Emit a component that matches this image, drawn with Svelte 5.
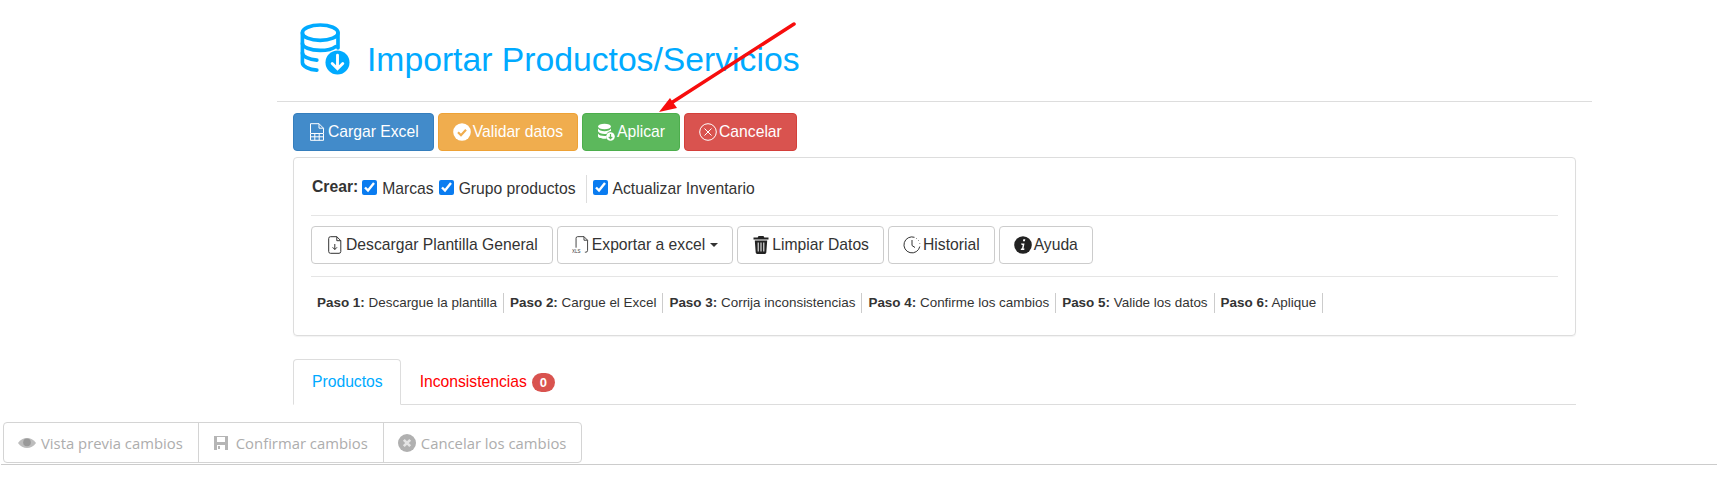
<script>
    const steps = [
        ['Paso 1:', 'Descargue la plantilla'],
        ['Paso 2:', 'Cargue el Excel'],
        ['Paso 3:', 'Corrija inconsistencias'],
        ['Paso 4:', 'Confirme los cambios'],
        ['Paso 5:', 'Valide los datos'],
        ['Paso 6:', 'Aplique']
    ];
</script>

<div class="page">
    <main class="content">
        <header class="title-row">
            <svg class="title-icon" viewBox="0 0 52 54" fill="none" stroke="#00aaff" stroke-width="3.8" stroke-linecap="round">
                <ellipse cx="21" cy="10" rx="18.5" ry="8" />
                <path d="M2.5 10v31c0 4 7 7.5 15 8M39.500 10v16" />
                <path d="M2.500 21c0 4 8 7.500 18.500 7.500 7 0 13-1.500 16-4M2.500 31c0 4 7 7 15 7.500" />
                <circle cx="39" cy="41" r="12.500" fill="#00aaff" stroke="none" />
                <path d="M39 33.500v14M33.500 42l5.500 5.500 5.500-5.500" stroke="#fff" stroke-width="3" />
            </svg>
            <h1>Importar Productos/Servicios</h1>
        </header>

        <div class="actions">
            <button class="btn blue">
                <svg class="ico" viewBox="0 0 16 18" fill="none" stroke="currentColor" stroke-width="1">
                    <path d="M1.500 10V.700h8.500l4.500 4.500V10M10 .700v4.500h4.500M1.500 10.500h13v6.800h-13zM1.500 13.800h13M5.800 10.500v6.800M10.200 10.500v6.800" />
                </svg>
                Cargar Excel
            </button>
            <button class="btn orange">
                <svg class="ico" viewBox="0 0 18 18">
                    <circle cx="9" cy="9" r="8.800" fill="#fff" />
                    <path d="M5 9.200l3 3 5-5.400" fill="none" stroke="#f0ad4e" stroke-width="2.200" />
                </svg>
                Validar datos
            </button>
            <button class="btn green">
                <svg class="ico" viewBox="0 0 18 18" fill="#fff">
                    <ellipse cx="7.500" cy="3.500" rx="6.500" ry="2.800" />
                    <path d="M1 5.500c1 2 3.500 2.700 6.500 2.700S13 7.500 14 5.500V8c-1.500 0-3.500 1-4.200 2.800-.700.100-1.500.200-2.300.200-3 0-5.500-.800-6.500-2.700zM1 10.500c1 1.800 3.500 2.500 6.500 2.500h1.800l.300 2.600c-.700.200-1.400.200-2.100.200-3.500 0-6.500-1-6.500-2.800z" />
                    <circle cx="13.500" cy="13.500" r="4.300" />
                    <path d="M13.500 11v4.500M11.700 13.800l1.800 1.800 1.800-1.800" fill="none" stroke="#5cb85c" stroke-width="1.200" />
                </svg>
                Aplicar
            </button>
            <button class="btn red">
                <svg class="ico" viewBox="0 0 18 18" fill="none" stroke="#fff" stroke-width="1">
                    <circle cx="9" cy="9" r="8.300" />
                    <path d="M5.500 5.500l7 7M12.500 5.500l-7 7" />
                </svg>
                Cancelar
            </button>
        </div>

        <section class="panel">
            <div class="options">
                <strong class="crear">Crear:</strong>
                <label><input type="checkbox" checked /> Marcas</label>
                <label><input type="checkbox" checked /> Grupo productos</label>
                <span class="vsep"></span>
                <label><input type="checkbox" checked /> Actualizar Inventario</label>
            </div>
            <div class="tools">
                <button class="btn plain">
                    <svg class="ico" viewBox="0 0 16 18" fill="none" stroke="#333" stroke-width="1">
                        <path d="M3.500.700h6.300l4 4v10.800a1.800 1.800 0 0 1-1.800 1.800H3.500a1.800 1.800 0 0 1-1.800-1.800V2.500A1.800 1.800 0 0 1 3.500.700z" />
                        <path d="M9.800.700v4h4M7.800 8v5.500M5.600 11.300l2.200 2.200 2.200-2.200" />
                    </svg>
                    Descargar Plantilla General
                </button>
                <button class="btn plain">
                    <svg class="ico xls" viewBox="0 0 20 20" fill="none" stroke="#333" stroke-width="1">
                        <path d="M4.500 13V2.500A1.800 1.800 0 0 1 6.300.700h7l4 4V16a2 2 0 0 1-2 2h-1M13.300.700v4h4" />
                        <text x="0" y="19" class="xls-text">XLS</text>
                    </svg>
                    Exportar a excel
                    <span class="caret"></span>
                </button>
                <button class="btn plain">
                    <svg class="ico" viewBox="0 0 16 18" fill="#222">
                        <path d="M5.500 0h5l.800 1.600H15.500v2H.500v-2h4.200zM1.800 4.500h12.400l-.900 12a1.500 1.500 0 0 1-1.500 1.400H4.200a1.500 1.500 0 0 1-1.500-1.400z" />
                        <path d="M5.200 6.500v9M8 6.500v9M10.800 6.500v9" stroke="#fff" stroke-width="1" />
                    </svg>
                    Limpiar Datos
                </button>
                <button class="btn plain">
                    <svg class="ico" viewBox="0 0 18 18" fill="none" stroke="#333" stroke-width="1">
                        <path d="M11.500 1.300A8 8 0 1 0 16.800 10.500" />
                        <path d="M13.500 2.500l.5.400M15.500 4.500l.3.500M16.700 7l.1.600" />
                        <path d="M9 4v5.500l3 2" />
                    </svg>
                    Historial
                </button>
                <button class="btn plain">
                    <svg class="ico" viewBox="0 0 18 18">
                        <circle cx="9" cy="9" r="8.800" fill="#222" />
                        <path d="M9.300 3.300h2l-.400 2h-2zM7 7.500h3.500L9.500 12.500h1l-.300 1.500H6.700l.300-1.500h1l.700-3.500h-1z" fill="#fff" />
                    </svg>
                    Ayuda
                </button>
            </div>
            <ul class="steps">
                {#each steps as [paso, texto]}
                    <li><b>{paso}</b> {texto}</li>
                {/each}
            </ul>
        </section>

        <nav class="tabs">
            <a class="tab active" href="#productos">Productos</a>
            <a class="tab warn" href="#inconsistencias">Inconsistencias <span class="badge">0</span></a>
        </nav>
    </main>

    <footer class="footer">
        <div class="group">
            <span class="gbtn">
                <svg class="gico" viewBox="0 0 16 16">
                    <path d="M0 8c2-3 5-4.500 8-4.500S14 5 16 8c-2 3-5 4.500-8 4.500S2 11 0 8z" fill="#bdbdbd" />
                    <circle cx="8" cy="7.500" r="3.400" fill="#999" />
                </svg>
                Vista previa cambios
            </span>
            <span class="gbtn">
                <svg class="gico save" viewBox="0 0 16 16" fill="#b5b5b5">
                    <path d="M1 1h14v14H1zM4 2v5h8V2zM4 10v5h8v-5z" fill-rule="evenodd" />
                    <rect x="5" y="11" width="2" height="3" />
                </svg>
                Confirmar cambios
            </span>
            <span class="gbtn">
                <svg class="gico" viewBox="0 0 18 18">
                    <circle cx="9" cy="9" r="9" fill="#b0b0b0" />
                    <path d="M5.800 5.800l6.400 6.400M12.200 5.800l-6.400 6.400" stroke="#e4e4e4" stroke-width="2.600" />
                </svg>
                Cancelar los cambios
            </span>
        </div>
    </footer>

    <svg class="arrow" viewBox="0 0 170 100" fill="none">
        <path d="M164 4L38 85" stroke="#f70d0d" stroke-width="3.500" stroke-linecap="round" />
        <path d="M29 92l11-14 7 10z" fill="#f70d0d" />
    </svg>
</div>

<style>
    :global(body) {
        margin: 0;
        background: #fff;
        font-family: "Liberation Sans", Arial, sans-serif;
        color: #333;
    }

    .page {
        position: relative;
        width: 1717px;
        height: 487px;
        overflow: hidden;
    }

    .content {
        margin-left: 277px;
        width: 1315px;
        height: 414px;
    }

    .title-row {
        display: flex;
        align-items: flex-start;
        height: 102px;
        box-sizing: border-box;
        padding: 23px 0 0 23px;
        border-bottom: 1px solid #ddd;
    }

    .title-icon {
        width: 50px;
        height: 52px;
        flex: none;
    }

    h1 {
        margin: 16px 0 0 17px;
        font-size: 33.7px;
        font-weight: 400;
        line-height: 40px;
        color: #00aaff;
    }

    .actions {
        display: flex;
        gap: 4px;
        margin: 11px 0 0 16px;
    }

    .btn {
        display: inline-flex;
        align-items: center;
        gap: 2px;
        height: 38px;
        box-sizing: border-box;
        padding: 0 14px;
        border: 1px solid transparent;
        border-radius: 4px;
        font-family: inherit;
        font-size: 15.7px;
        color: #fff;
        white-space: nowrap;
    }

    .ico {
        width: 18px;
        height: 18px;
        flex: none;
    }

    .blue { background: #428bca; border-color: #357ebd; }
    .orange { background: #f0ad4e; border-color: #eea236; }
    .green { background: #5cb85c; border-color: #4cae4c; }
    .red { background: #d9534f; border-color: #d43f3a; }

    .plain {
        background: #fff;
        border-color: #ccc;
        color: #333;
    }

    .panel {
        margin: 6px 16px 0;
        height: 179px;
        box-sizing: border-box;
        padding: 14px 17px 0 17px;
        border: 1px solid #ddd;
        border-radius: 4px;
        box-shadow: 0 1px 1px rgba(0, 0, 0, .05);
    }

    .options {
        display: flex;
        align-items: center;
        height: 44px;
        box-sizing: border-box;
        padding: 0 0 10px 1px;
        border-bottom: 1px solid #e5e5e5;
        font-size: 15.7px;
    }

    .crear {
        margin-right: 4px;
        position: relative;
        top: -2px;
    }

    label {
        display: inline-flex;
        align-items: center;
        margin-right: 5px;
        gap: 5px;
    }

    label input {
        width: 15px;
        height: 15px;
        margin: 0;
        accent-color: #0a7cf0;
        position: relative;
        top: -1px;
    }

    .vsep {
        width: 1px;
        height: 28px;
        margin: 0 6px 0 5px;
        background: #ddd;
    }

    .tools {
        display: flex;
        gap: 4px;
        padding: 10px 0 12px;
        border-bottom: 1px solid #e5e5e5;
    }

    .xls-text {
        font-size: 5px;
        font-family: "Liberation Sans", sans-serif;
        fill: #333;
        stroke: none;
    }

    .caret {
        width: 0;
        height: 0;
        margin-left: 3px;
        border-top: 4px solid #333;
        border-left: 4px solid transparent;
        border-right: 4px solid transparent;
    }

    .steps {
        display: flex;
        list-style: none;
        margin: 16px 0 0;
        padding: 0 0 0 6px;
        font-size: 13.45px;
    }

    .steps li {
        height: 20px;
        line-height: 19px;
        padding-right: 6px;
        margin-right: 6px;
        border-right: 1px solid #ccc;
        white-space: nowrap;
    }

    .tabs {
        display: flex;
        margin: 23px 16px 0;
        height: 46px;
        box-sizing: border-box;
        border-bottom: 1px solid #ddd;
    }

    .tab {
        display: block;
        height: 46px;
        box-sizing: border-box;
        padding: 13px 17px 0 18px;
        font-size: 15.7px;
        text-decoration: none;
        border: 1px solid transparent;
        border-radius: 4px 4px 0 0;
    }

    .active {
        background: #fff;
        border-color: #ddd #ddd #fff;
        color: #00aaff;
    }

    .warn {
        color: #f00;
    }

    .badge {
        display: inline-block;
        min-width: 6px;
        padding: 3px 7.5px;
        margin-left: 1px;
        border-radius: 10px;
        background: #d9534f;
        color: #fff;
        font-size: 13px;
        font-weight: 700;
        line-height: 1;
    }

    .footer {
        margin: 8px 0 0 1px;
        height: 43px;
        box-sizing: border-box;
        padding-left: 2px;
        border-bottom: 1px solid #ccc;
    }

    .group {
        display: inline-flex;
        height: 41px;
        box-sizing: border-box;
        border: 1px solid #d4d4d4;
        border-radius: 4px;
    }

    .gbtn {
        display: flex;
        align-items: center;
        gap: 5px;
        padding: 0 15px 0 14px;
        border-left: 1px solid #d4d4d4;
        font-family: "Open Sans", sans-serif;
        font-size: 14.85px;
        color: #adadad;
        white-space: nowrap;
    }

    .gbtn:first-child {
        border-left: 0;
    }

    .gico {
        width: 18px;
        height: 18px;
        flex: none;
    }

    .save {
        width: 16px;
        margin-right: 2px;
    }

    .arrow {
        position: absolute;
        left: 630px;
        top: 20px;
        width: 170px;
        height: 100px;
    }
</style>
